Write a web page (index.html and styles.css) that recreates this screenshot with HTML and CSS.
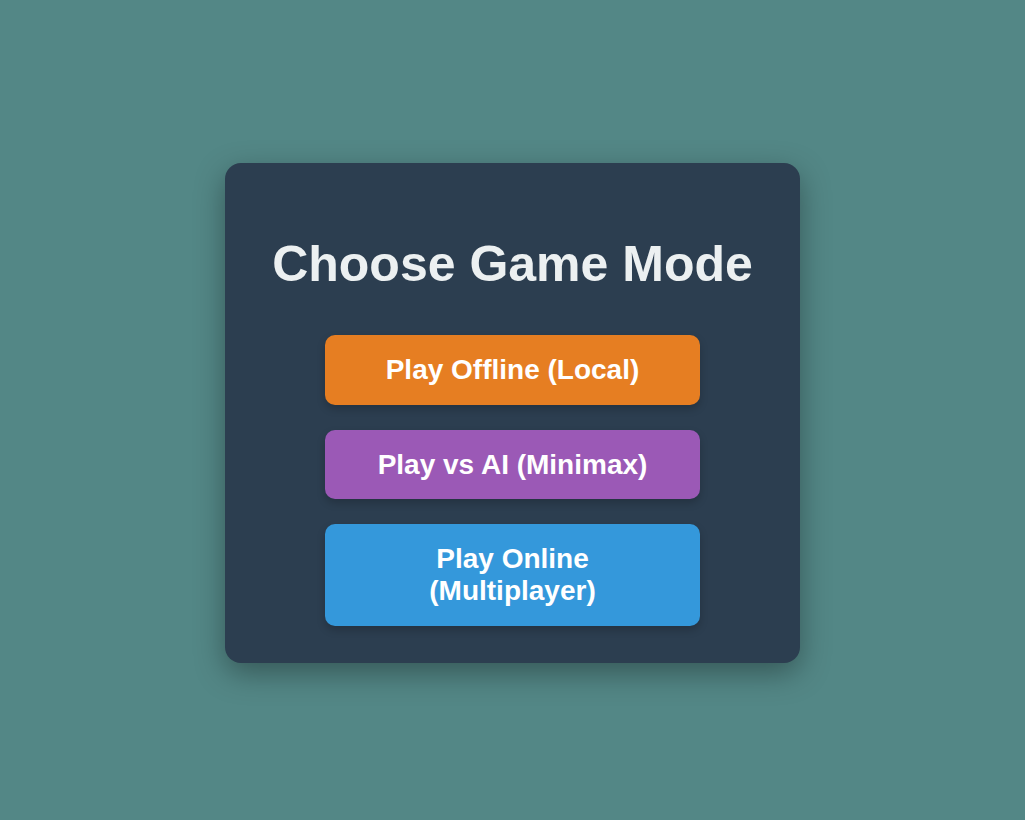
FILE: index.html
```html
<!DOCTYPE html>
<html lang="en">
<head>
<meta charset="utf-8">
<title>Choose Game Mode</title>
<link rel="stylesheet" href="styles.css">
</head>
<body>
  <main class="mode-card">
    <h1 class="mode-title">Choose Game Mode</h1>
    <div class="mode-list">
      <button class="mode-btn mode-offline">Play Offline (Local)</button>
      <button class="mode-btn mode-ai">Play vs AI (Minimax)</button>
      <button class="mode-btn mode-online">Play Online (Multiplayer)</button>
    </div>
  </main>
</body>
</html>
```
FILE: styles.css
```css
* { box-sizing: border-box; }

html, body { height: 100%; }

body {
  margin: 0;
  padding-top: 6px;
  min-height: 100vh;
  background: #538786;
  font-family: "Liberation Sans", Arial, sans-serif;
  display: flex;
  align-items: center;
  justify-content: center;
}

.mode-card {
  width: 575px;
  height: 500px;
  background: #2c3e50;
  border-radius: 16px;
  padding: 40px 0 37px;
  box-shadow: 0 10px 30px rgba(0, 0, 0, 0.35);
  display: flex;
  flex-direction: column;
  align-items: center;
}

.mode-title {
  margin: 33px 0 0;
  font-size: 50px;
  font-weight: 700;
  line-height: 57px;
  color: #ecf0f1;
  text-align: center;
}

.mode-list {
  margin-top: 42px;
  display: flex;
  flex-direction: column;
  gap: 25px;
}

.mode-btn {
  width: 375px;
  padding: 19px 30px;
  border: none;
  border-radius: 10px;
  font-family: "Liberation Sans", Arial, sans-serif;
  font-size: 28px;
  font-weight: 700;
  line-height: 32px;
  color: #ffffff;
  text-align: center;
  box-shadow: 0 4px 8px rgba(0, 0, 0, 0.2);
  cursor: pointer;
}

.mode-offline { background: #e67e22; }
.mode-ai { background: #9b59b6; height: 69px; padding-top: 18px; padding-bottom: 18px; }
.mode-online { background: #3498db; height: 102px; }
```
